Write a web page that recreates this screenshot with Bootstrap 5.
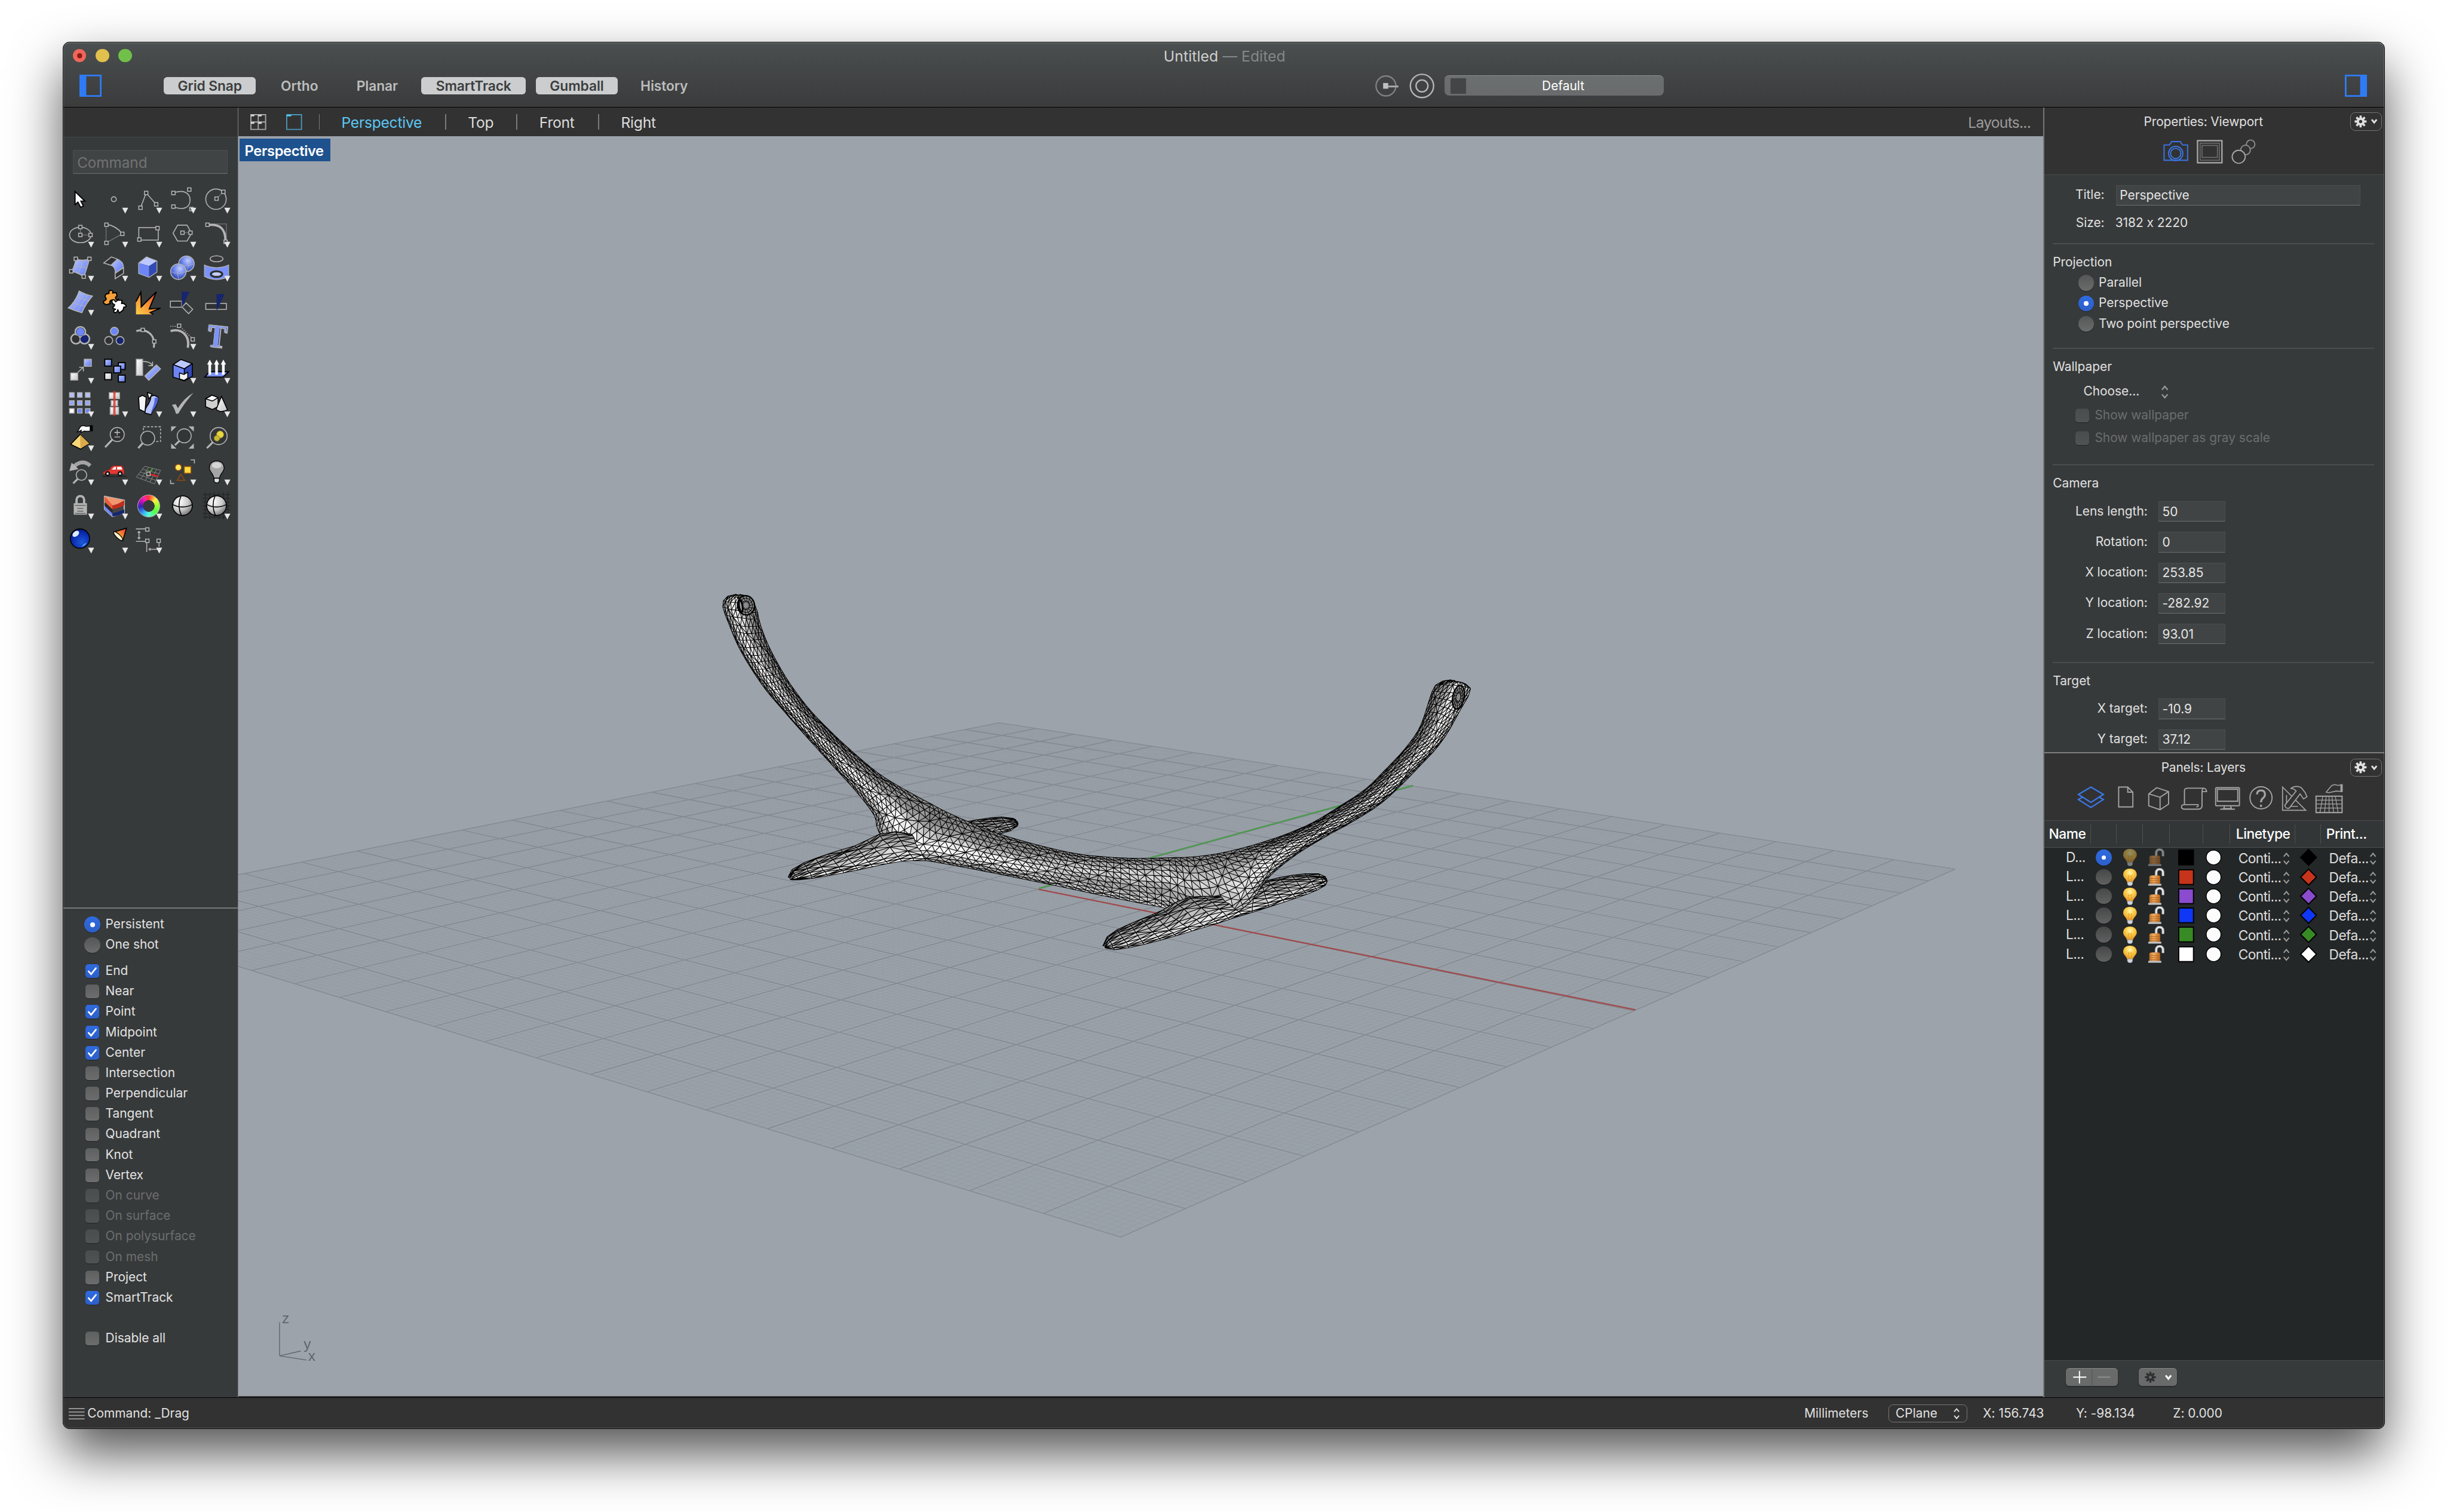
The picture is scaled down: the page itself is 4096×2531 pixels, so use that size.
<!DOCTYPE html>
<html lang="en" data-bs-theme="dark">
<head>
<meta charset="utf-8">
<title>Untitled — Edited</title>
<link href="https://cdn.jsdelivr.net/npm/bootstrap@5.3.0/dist/css/bootstrap.min.css" rel="stylesheet">
<style>
html,body{margin:0;background:#fff;overflow:hidden}
body{font-family:Inter,"Liberation Sans",sans-serif;font-size:22px;line-height:1;color:#e0e0e0;height:2531px;font-feature-settings:"calt" 0}
svg{display:block;overflow:visible;flex:none}
.desk{zoom:.94947;width:4314px;height:2666px;padding:75px 111px 0 112px;background:#fff}
.win{width:4091px;height:2443px;border-radius:11px;box-shadow:0 0 0 1px #000,0 44px 92px rgba(0,0,0,.68);background:#323232}
.clipper{border-radius:11px;height:100%;position:relative;overflow:hidden}
.clipper::after{content:"";position:absolute;inset:0;border:2px solid rgba(255,255,255,.2);border-radius:11px;pointer-events:none;border-top-color:rgba(255,255,255,.35)}
.titlebar{height:115px;background:linear-gradient(#4a4f4f,#3b3b3c);border-bottom:2px solid #000}
.lights{height:46px;padding-left:16px}
.light{width:24px;height:24px;border-radius:50%;margin-right:16.3px}
.wtitle{font-size:26px;color:#cfd0d0;letter-spacing:.1px;padding:2px 134px 0 0}
.toolrow{height:60px;padding:0 30px 0 28px;margin-top:0}
.snapbtn{height:31px;border-radius:6px;font-weight:600;font-size:24px;color:#bcbdbd;letter-spacing:-.1px;padding-top:2px}
.snapbtn.on{background:#cbcdce;color:#3c3e3f}
.disp{width:386px;height:36px;border-radius:8px;background:linear-gradient(#6c6f70,#696b6c);border-top:1px solid #8b8d8e;color:#fff;padding-left:10px}
.leftcol{width:308px;background:#373a3b;border-right:2px solid #7c7e7f}
.lefthead{height:52px;background:#323232;border-bottom:2px solid #454747}
.fld{background:#414445;border:1px solid #4b4e4f;border-bottom:2px solid #6d6f70;color:#e4e4e4}
.cmdfield{width:272px;height:42px;margin:22px 0 15px 17px;color:#717374;font-size:25.5px;padding:10px 0 0 6px}
.tools{display:grid;grid-template-columns:repeat(5,60px);grid-auto-rows:60px}
.tools svg{width:60px;height:60px}
.ln{fill:none;stroke:#b4b4b4;stroke-width:5}
.dim{fill:none;stroke:#777;stroke-width:4}
.osnap{height:863px;border-top:3px solid #757778;padding-top:10px}
.orow{height:36px;padding-left:28px;color:#e2e2e2}
.mk{width:46px;flex:none}
.rad{width:28px;height:28px;border-radius:50%;background:linear-gradient(#555656,#6b6c6c);box-shadow:0 1px 1px rgba(0,0,0,.4);flex:none}
.rad.on{background:linear-gradient(#2f6be1,#2c5fc8)}
.rad.on::after{content:"";width:8px;height:8px;border-radius:50%;background:#fff;margin:10px;display:block}
.chk{width:24px;height:24px;border-radius:5px;background:linear-gradient(#5e5f5f,#6c6d6d);box-shadow:0 1px 1px rgba(0,0,0,.4);flex:none}
.chk.on{background:linear-gradient(#2f6be1,#2c5fc8)}
.off{color:#6b6e6e!important}
.off .chk{background:linear-gradient(#4a4d4d,#505353)}
.tabs{height:50px;background:#323232;font-size:26px;color:#dcdcdc;letter-spacing:-.3px}
.tabs>div{padding-top:2px}
.tsep{width:2px;height:28px;background:#7a7a7a}
.view{width:3182px;height:2221px;background:#9ca3ab;position:relative}
.view canvas{width:3182px;height:2221px;display:block}
.vlabel{position:absolute;left:2px;top:4px;width:160px;height:40px;background:#1e528e;color:#fff;font-weight:600;font-size:25px;letter-spacing:-.4px;padding:4px 2px 0 0}
.rightcol{width:601px;border-left:3px solid #757778;background:#373a3b}
.phead{background:#323232;border-bottom:2px solid #4b4d4d}
.ptitle{padding:2px 0 0 22px;letter-spacing:-.15px}
.gearbtn{width:56px;height:32px;border:2px solid #767676;border-radius:9px;margin-right:4px;flex:none;gap:5px;--hole:#323232}
.pbody{height:1017px;overflow:hidden}
.prow{height:36px}
.psep{height:2px;background:#4b4e4f;margin-left:15px;width:566px;flex:none}
.pl1{width:106px}.pl2{width:182px}
.lhead{height:48px;background:#323637;border-bottom:2px solid #4d5050;font-weight:500;font-size:24px;color:#fff;letter-spacing:-.5px}
.lhead>div{height:34px;border-right:2px solid #4e5152}
.lhead>div:last-child{border:0}
.c1{width:82px}.c2{width:46px}.c3{width:46px}.c4{width:47px}.c5{width:59px}.c6{width:48px}.c7{width:114px}.c8{width:46px}.c9{width:108px}
.lrow{height:34px;font-size:24px;color:#dedede;letter-spacing:-.6px}
.lrow .rad:not(.on){background:linear-gradient(#464747,#606161)}
.lrow .c7,.lrow .c9{padding-top:3px}
.layers{background:#242728;flex:1;border-bottom:2px solid #4b4d4d}
.pfoot{height:64px;padding:0 0 6px 38px}
.fbtn{height:32px;border-radius:6px;background:#696b6b;border-top:1px solid #858787;box-shadow:0 1px 2px rgba(0,0,0,.5);--hole:#696b6b}
.status{height:55px;background:#323232;border-top:2px solid #000;font-size:22px;padding:2px 0 0 9px}
.cplane{width:139px;height:31px;border:2px solid #777;border-radius:8px;padding:0 11px 0 12px}
.wheel{width:40px;height:40px;border-radius:50%;border:2px solid #b4b4b4;margin:11px 0 0 10px;background:radial-gradient(circle,#373a3b 0 10px,transparent 10.5px),conic-gradient(#f33,#fe4 45deg,#af3 80deg,#5f4 130deg,#5fc 180deg,#37b4ff 215deg,#32b 265deg,#a1b 295deg,#f2a 330deg,#f33)}
.tw{position:relative;width:60px;height:60px}
.tw svg{position:absolute;inset:0}
</style>
</head>
<body>
<svg width="0" height="0" style="position:absolute">
<defs>
<linearGradient id="bl" x1="0" y1="0" x2="1" y2="1"><stop offset="0" stop-color="#bcc8ff"/><stop offset="1" stop-color="#5b76f2"/></linearGradient>
<linearGradient id="wh" x1="0" y1="0" x2="1" y2="1"><stop offset="0" stop-color="#fff"/><stop offset="1" stop-color="#c4c4c4"/></linearGradient>
<linearGradient id="fire" x1="0" y1="1" x2="1" y2="0"><stop offset="0" stop-color="#fdd04c"/><stop offset=".5" stop-color="#f58b34"/><stop offset="1" stop-color="#e8352b"/></linearGradient>
<radialGradient id="sph" cx=".6" cy=".3" r=".75"><stop offset="0" stop-color="#c4cfff"/><stop offset=".5" stop-color="#6c85ee"/><stop offset="1" stop-color="#223a9c"/></radialGradient>
<radialGradient id="gsp" cx=".35" cy=".3" r=".8"><stop offset="0" stop-color="#fff"/><stop offset=".55" stop-color="#c9c9c9"/><stop offset="1" stop-color="#666"/></radialGradient>
<radialGradient id="ball" cx=".6" cy=".7" r=".8"><stop offset="0" stop-color="#1d59d8"/><stop offset=".6" stop-color="#0a2bb0"/><stop offset="1" stop-color="#03106a"/></radialGradient>
<radialGradient id="bulbg" cx=".5" cy=".3" r=".6"><stop offset="0" stop-color="#fff6b0"/><stop offset=".5" stop-color="#fbcf4c"/><stop offset="1" stop-color="#eba02f"/></radialGradient>
<linearGradient id="lockg"><stop offset="0" stop-color="#c9792a"/><stop offset=".4" stop-color="#f0b066"/><stop offset="1" stop-color="#b8651c"/></linearGradient>
<symbol id="nd" overflow="visible"><rect x="-9" y="-9" width="18" height="18" fill="#2f3132" stroke="#b4b4b4" stroke-width="5"/></symbol>
<symbol id="tri" overflow="visible"><path d="M131 135H163L147 166Z" fill="#e6e6e6"/></symbol>
<symbol id="gear" viewBox="-12 -12 24 24"><g stroke="currentColor" stroke-width="3.800"><path d="M0-10.5V10.5M-10.5 0H10.5M-7.4-7.4L7.4 7.4M-7.4 7.4L7.4-7.4"/></g><circle r="7" fill="currentColor"/><circle r="2.800" style="fill:var(--hole)"/></symbol>
<symbol id="ud" viewBox="0 0 14 26"><path d="M2 9L7 3L12 9M2 17L7 23L12 17" fill="none" stroke="currentColor" stroke-width="2.4"/></symbol>
<symbol id="dn" viewBox="0 0 12 10"><path d="M2 2L6 7L10 2" fill="none" stroke="currentColor" stroke-width="2.8"/></symbol>
<symbol id="tick" viewBox="0 0 24 24"><path d="M5.5 12.5L10 17.5L18.5 7" fill="none" stroke="#fff" stroke-width="2.8" stroke-linecap="round"/></symbol>
<symbol id="bulb" viewBox="0 0 26 32"><path d="M13 1C5 1 1 6 1 11.500C1 16.500 6 19 8 25H18C20 19 25 16.500 25 11.500C25 6 21 1 13 1Z" fill="url(#bulbg)"/><path d="M11 24L10 13L13 15L16 13L15 24" fill="none" stroke="#e59b25"/><path d="M8.500 24.500H17.500V28.500L15.500 31H10.500L8.500 28.500Z" fill="#cfd5dc" stroke="#8d939a" stroke-width=".8"/></symbol>
<symbol id="ulock" viewBox="0 0 30 32"><path d="M15 14V8A6 6 0 0 1 27 8V14" fill="none" stroke="#8d8d8d" stroke-width="5"/><path d="M15 14V8A6 6 0 0 1 27 8V14" fill="none" stroke="#ececec" stroke-width="2.600"/><path d="M3 16Q3 13 8 13H18Q22 13 22 16V28H3Z" fill="url(#lockg)"/><path d="M3 18.500H22M3 22H22M3 25.500H22" stroke="#a85a18" stroke-width=".9"/><path d="M1 28H24V31H1Z" fill="#c9c9c9"/></symbol>
</defs>
</svg>
<div class="desk">
<div class="win"><div class="clipper d-flex flex-column">

<header class="titlebar">
  <div class="lights d-flex align-items-center">
    <div class="light" style="background:#ee665b"><svg width="24" height="24"><circle cx="12" cy="12" r="4.500" fill="#8c1a10"/></svg></div>
    <div class="light" style="background:#e1c14e"></div>
    <div class="light" style="background:#71c049"></div>
    <div class="wtitle flex-grow-1 text-center">Untitled <span style="color:#858888">— Edited</span></div>
  </div>
  <div class="toolrow d-flex align-items-center">
    <svg width="39" height="39"><path d="M1.500 1.500H37.500V37.500H1.500Z" fill="none" stroke="#2f7bf6" stroke-width="3"/><path d="M0 0H12V39H0Z" fill="#2f7bf6"/></svg>
    <div class="d-flex" style="gap:18px;margin-left:110px">
      <div class="snapbtn on d-flex align-items-center justify-content-center" style="width:162px">Grid Snap</div>
      <div class="snapbtn d-flex align-items-center justify-content-center" style="width:118px">Ortho</div>
      <div class="snapbtn d-flex align-items-center justify-content-center" style="width:120px">Planar</div>
      <div class="snapbtn on d-flex align-items-center justify-content-center" style="width:184px">SmartTrack</div>
      <div class="snapbtn on d-flex align-items-center justify-content-center" style="width:144px">Gumball</div>
      <div class="snapbtn d-flex align-items-center justify-content-center" style="width:128px">History</div>
    </div>
    <svg width="112" height="46" style="margin-left:1188px"><circle cx="21" cy="23" r="17.500" fill="none" stroke="#7e8181" stroke-width="2.500"/><path d="M16 18H25V28H16Z" fill="#bfc0c0"/><path d="M24 24H43" stroke="#a9abab" stroke-width="3"/><circle cx="84.500" cy="23" r="20.500" fill="none" stroke="#b5b7b7" stroke-width="2.500"/><circle cx="84.500" cy="23" r="10.500" fill="none" stroke="#b5b7b7" stroke-width="2.500"/></svg>
    <div class="disp d-flex align-items-center" style="margin-left:12px"><div style="width:28px;height:28px;background:#434546"></div><div class="flex-grow-1 text-center" style="padding:2px 6px 0 0">Default</div></div>
    <svg class="ms-auto" width="39" height="39"><path d="M1.500 1.500H37.500V37.500H1.500Z" fill="none" stroke="#2f7bf6" stroke-width="3"/><path d="M27 0H39V39H27Z" fill="#2f7bf6"/></svg>
  </div>
</header>

<main class="d-flex flex-grow-1" style="min-height:0">
<aside class="leftcol d-flex flex-column">
  <div class="lefthead"></div>
  <div class="fld cmdfield">Command</div>
  <div class="tools" id="tools">
<svg viewBox="0 0 180 180"><path d="M62 49V119L77 105L92 133L106 126L93 100H114Z" fill="#fff" stroke="#000" stroke-width="6"/></svg>
<svg viewBox="0 0 180 180"><circle cx="87" cy="90" r="13" class="ln"/><use href="#tri"/></svg>
<svg viewBox="0 0 180 180"><path class="ln" d="M48 135L78 57L131 117"/><use href="#nd" x="78" y="57"/><use href="#nd" x="48" y="135"/><use href="#nd" x="131" y="117"/><use href="#tri"/></svg>
<svg viewBox="0 0 180 180"><path class="ln" d="M50 54C100 38 130 60 130 95S100 150 50 133"/><use href="#nd" x="42" y="57"/><use href="#nd" x="126" y="39"/><use href="#nd" x="42" y="129"/><use href="#nd" x="137" y="142"/><use href="#tri"/></svg>
<svg viewBox="0 0 180 180"><circle cx="87" cy="90" r="54" class="ln"/><path class="dim" d="M90 87L126 51"/><use href="#nd" x="90" y="87"/><use href="#nd" x="126" y="51"/><use href="#tri"/></svg>

<svg viewBox="0 0 180 180"><ellipse cx="90" cy="99" rx="57" ry="41" class="ln"/><path class="dim" d="M90 57V99H144"/><use href="#nd" x="90" y="57"/><use href="#nd" x="90" y="99"/><use href="#nd" x="144" y="99"/><use href="#tri"/></svg>
<svg viewBox="0 0 180 180"><path class="dim" d="M46 45V141L132 93"/><path class="ln" d="M48 43Q100 50 132 93"/><use href="#nd" x="48" y="45"/><use href="#nd" x="132" y="93"/><use href="#nd" x="48" y="141"/><use href="#tri"/></svg>
<svg viewBox="0 0 180 180"><rect x="39" y="60" width="103" height="66" class="ln"/><use href="#nd" x="42" y="123"/><use href="#nd" x="138" y="63"/><use href="#tri"/></svg>
<svg viewBox="0 0 180 180"><path class="ln" d="M40 90L64 47H114L138 90L114 131H64Z"/><path class="dim" d="M90 87H132"/><use href="#nd" x="90" y="87"/><use href="#nd" x="132" y="87"/><use href="#tri"/></svg>
<svg viewBox="0 0 180 180"><path class="dim" d="M50 41H142V130"/><path d="M50 46C110 42 137 66 137 130" fill="none" stroke="#b4b4b4" stroke-width="12"/><use href="#nd" x="42" y="45"/><use href="#nd" x="138" y="135"/><use href="#tri"/></svg>

<svg viewBox="0 0 180 180"><path d="M66 45Q102 60 138 45Q124 100 108 139Q80 120 44 111Q62 80 66 45Z" fill="url(#bl)" stroke="#b4b4b4" stroke-width="5"/><path class="ln" style="stroke-width:3" d="M102 52Q94 90 78 124M56 80Q90 92 126 92"/><use href="#nd" x="66" y="45"/><use href="#nd" x="138" y="45"/><use href="#nd" x="108" y="139"/><use href="#nd" x="42" y="111"/><use href="#tri"/></svg>
<svg viewBox="0 0 180 180"><path d="M34 67L74 35L106 47L72 79Z" fill="#2f3132" stroke="#b4b4b4" stroke-width="5"/><path d="M72 79L106 47C134 56 138 78 138 92L94 122C96 100 90 86 72 79Z" fill="url(#bl)" stroke="#b4b4b4" stroke-width="4"/><path d="M94 122L138 92V122L94 150Z" fill="#2f3132" stroke="#b4b4b4" stroke-width="5"/><use href="#tri"/></svg>
<svg viewBox="0 0 180 180"><path d="M38 67L80 35L135 57L94 83Z" fill="#bcc8ff"/><path d="M38 67L94 83V143L38 123Z" fill="#6d85f5"/><path d="M94 83L135 57V115L94 143Z" fill="#3349b4"/><path class="ln" style="stroke-width:4" d="M38 67L80 35L135 57V115L94 143L38 123Z"/><use href="#tri"/></svg>
<svg viewBox="0 0 180 180"><g stroke="#b4b4b4" stroke-width="5"><circle cx="111" cy="71" r="41" fill="url(#sph)"/><circle cx="68" cy="113" r="41" fill="url(#sph)"/></g><path class="ln" style="stroke-width:2.500" d="M70 71Q111 92 152 71M118 30Q130 70 112 112M27 112Q68 132 109 112M74 72Q58 112 70 154"/><use href="#tri"/></svg>
<svg viewBox="0 0 180 180"><ellipse cx="90" cy="45" rx="34" ry="16" class="ln"/><path d="M26 78Q90 106 154 78V138Q90 172 26 138Z" fill="#7b92fa" stroke="#b4b4b4" stroke-width="4"/><ellipse cx="90" cy="126" rx="30" ry="15" fill="#c3ceff" stroke="#2e3031" stroke-width="11"/><use href="#tri"/></svg>

<svg viewBox="0 0 180 180"><path d="M84 35Q118 54 154 62Q120 100 98 150Q62 140 26 125Q66 90 84 35Z" fill="url(#bl)" stroke="#b4b4b4" stroke-width="5"/><path class="ln" style="stroke-width:3" d="M108 47Q80 100 50 134M130 56Q98 100 74 144M70 64Q104 82 138 86M48 96Q84 112 118 116"/><use href="#tri"/></svg>
<svg viewBox="0 0 180 180"><g stroke="#000" stroke-width="6" stroke-linejoin="round"><path d="M44 52L62 48Q58 30 74 32Q86 34 80 46L100 44L104 62Q92 66 98 78Q104 84 112 78L106 96L86 92Q84 80 72 84Q62 90 68 102L46 108L34 100Q28 90 42 84Q52 76 40 66Z" fill="#f5a03a"/><path d="M78 84Q90 76 96 92L108 84L130 84L128 102Q138 96 150 110Q156 122 140 120L136 136L116 152L108 134Q104 154 88 148Q84 136 96 132L84 128Q78 122 88 116Q96 106 84 104Q74 96 78 84Z" fill="#fff"/></g></svg>
<svg viewBox="0 0 180 180"><path d="M24 159V92L50 42L52 119L132 39L94 127H154L99 148L116 159Z" fill="url(#fire)"/><path d="M24 92L50 42L52 119L132 39L94 130L154 126L99 149L116 159" fill="none" stroke="#000" stroke-width="6"/></svg>
<svg viewBox="0 0 180 180"><rect x="26" y="89" width="60" height="32" fill="#2f3132" stroke="#b4b4b4" stroke-width="5"/><path class="ln" d="M109 98L144 132L122 155L88 120Z"/><path d="M85 39H127L87 123Z" fill="#16256e"/></svg>
<svg viewBox="0 0 180 180"><rect x="33" y="101" width="109" height="31" fill="#2f3132" stroke="#b4b4b4" stroke-width="5"/><path d="M90 51H132L94 134H90Z" fill="#16256e"/></svg>

<svg viewBox="0 0 180 180"><g stroke="#b4b4b4" stroke-width="8"><circle cx="67" cy="108" r="26" fill="#2f3132"/><circle cx="112" cy="108" r="26" fill="#16256e"/><circle cx="90" cy="71" r="27" fill="#2f3132"/></g><circle cx="67" cy="108" r="19" fill="#2f3132"/><circle cx="112" cy="108" r="19" fill="#16256e"/><circle cx="90" cy="71" r="21" fill="#6d85f5"/><use href="#tri"/></svg>
<svg viewBox="0 0 180 180"><g stroke="#b4b4b4" stroke-width="5"><circle cx="90" cy="68" r="21" fill="#6d85f5"/><circle cx="60" cy="117" r="21" fill="#2f3132"/><circle cx="120" cy="117" r="21" fill="#16256e"/></g></svg>
<svg viewBox="0 0 180 180"><path d="M26 67C80 52 130 85 118 155" fill="none" stroke="#b4b4b4" stroke-width="10"/><use href="#nd" x="60" y="61"/><use href="#nd" x="121" y="122"/></svg>
<svg viewBox="0 0 180 180"><path d="M27 67C85 50 130 90 118 155" fill="none" stroke="#b4b4b4" stroke-width="12"/><path d="M25 42H60M88 54L136 100" stroke="#b4b4b4" stroke-width="5" stroke-dasharray="5 7"/><use href="#nd" x="72" y="39"/><use href="#nd" x="144" y="111"/><use href="#tri"/></svg>
<svg viewBox="0 0 180 180"><g text-anchor="middle" font-family="Liberation Serif,serif" font-weight="700" font-size="172" transform="translate(83 151) rotate(6) scale(.84 1)"><text x="10" y="1" fill="#3349b4" stroke="#b4b4b4" stroke-width="7">T</text><text x="0" y="0" fill="#7c93fa" stroke="#b4b4b4" stroke-width="3">T</text></g></svg>

<svg viewBox="0 0 180 180"><g stroke="#b4b4b4" stroke-width="5"><rect x="39" y="109" width="37" height="37" fill="url(#wh)"/><rect x="111" y="36" width="37" height="37" fill="url(#bl)"/><path d="M76 106L106 78M84 78H106V100" fill="none"/></g><use href="#tri"/></svg>
<svg viewBox="0 0 180 180"><g stroke="#000" stroke-width="6"><rect x="39" y="36" width="36" height="36" fill="url(#bl)"/><rect x="111" y="54" width="36" height="36" fill="url(#bl)"/><rect x="87" y="72" width="36" height="36" fill="url(#bl)"/><rect x="39" y="108" width="36" height="36" fill="url(#wh)"/><rect x="111" y="120" width="36" height="36" fill="url(#bl)"/></g></svg>
<svg viewBox="0 0 180 180"><g stroke="#b4b4b4" stroke-width="5"><rect x="26" y="36" width="33" height="85" fill="url(#wh)"/><path d="M132 66L154 87L92 147L71 124Z" fill="url(#bl)"/><path d="M60 48Q96 46 112 68M112 48V70H90" fill="none"/></g></svg>
<svg viewBox="0 0 180 180"><g stroke="#000" stroke-width="5" stroke-linejoin="round"><path d="M40 64L82 37L142 59L100 87Z" fill="#bcc8ff"/><path d="M40 64L100 87V150L40 130Z" fill="#6d85f5"/><path d="M100 87L142 59V126L100 150Z" fill="#3349b4"/><path d="M74 108L98 116L118 104V136L98 148L74 140Z" fill="#f2f2f2"/></g><use href="#tri"/></svg>
<svg viewBox="0 0 180 180"><path d="M28 130L54 102H154L124 130Z" fill="#7b92fa" stroke="#000" stroke-width="6"/><path d="M54 118V60M90 118V60M126 118V60" stroke="#fff" stroke-width="14"/><path d="M54 38L68 64H40ZM90 38L104 64H76ZM126 38L140 64H112Z" fill="#fff"/><use href="#tri"/></svg>

<svg viewBox="0 0 180 180"><g stroke="#b4b4b4" stroke-width="5" fill="#b4c0fa"><path d="M33 36h24v24h-24zM75 36h24v24h-24zM117 36h24v24h-24z"/><path fill="#93a5f7" d="M33 78h24v24h-24zM75 78h24v24h-24zM117 78h24v24h-24z"/><path fill="#fff" d="M33 120h24v24h-24z"/><path fill="#6d85f5" d="M75 120h24v24h-24zM117 120h24v24h-24z"/></g><use href="#tri"/></svg>
<svg viewBox="0 0 180 180"><g stroke="#b4b4b4" stroke-width="5" fill="url(#wh)"><rect x="63" y="36" width="54" height="31"/><rect x="73" y="78" width="34" height="27"/><rect x="68" y="113" width="44" height="37"/></g><path d="M84 27H96V158H84Z" fill="#d8302b" opacity=".8"/><use href="#tri"/></svg>
<svg viewBox="0 0 180 180"><g stroke="#000" stroke-width="5" stroke-linejoin="round"><path d="M84 34L110 44L92 70Z" fill="#e8e8e8"/><path d="M38 60L58 50L78 60L72 138L42 124Z" fill="#f4f4f4"/><path d="M104 54L122 50L142 60Q142 80 128 110Q112 130 104 152L72 144Q70 120 90 96Q102 76 104 54Z" fill="#b6c3ff"/><path d="M122 64L142 60Q142 84 126 112Q112 130 104 152Q104 130 116 106Q124 84 122 64Z" fill="#5068d8" stroke="none"/></g><use href="#tri"/></svg>
<svg viewBox="0 0 180 180"><path d="M34 100L54 96L66 118Q96 66 148 36Q98 92 68 146L56 148Q48 118 34 100Z" fill="#b4b4b4"/><use href="#tri"/></svg>
<svg viewBox="0 0 180 180"><g stroke="#000" stroke-width="5" stroke-linejoin="round"><path d="M32 68L66 49L98 62L98 110L68 125L32 110Z" fill="#cfcfcf"/><path d="M32 68L66 49L98 62L68 80Z" fill="#fff"/><path d="M116 55L88 124Q114 146 148 126Z" fill="url(#wh)"/></g><use href="#tri"/></svg>

<svg viewBox="0 0 180 180"><path d="M74 64L92 34Q104 26 120 34L142 32V58Q124 62 112 58L92 66L96 54Z" fill="#fff" stroke="#000" stroke-width="4"/><path d="M142 28H156V60H142Z" fill="#000"/><path d="M88 77L39 129L91 154L137 124Z" fill="#f7d778" stroke="#000" stroke-width="5"/><path d="M88 77L91 152L137 124Z" fill="#d9a94a"/><use href="#tri"/></svg>
<svg viewBox="0 0 180 180"><circle cx="105" cy="77" r="37" class="ln" style="fill:#2f3132"/><path d="M41 144L79 104" stroke="#b4b4b4" stroke-width="10"/><path class="ln" d="M90 66H120M105 51V81M90 90H120"/></svg>
<svg viewBox="0 0 180 180"><rect x="63" y="36" width="91" height="78" class="ln" stroke-dasharray="12 8"/><circle cx="86" cy="96" r="37" class="ln" style="fill:#333637"/><path d="M36 149L60 122" stroke="#b4b4b4" stroke-width="10"/></svg>
<svg viewBox="0 0 180 180"><path d="M30 34H58L30 62ZM150 34V62L122 34ZM30 152V124L58 152ZM150 152H122L150 124Z" fill="#b4b4b4"/><circle cx="99" cy="84" r="37" class="ln" style="fill:#333637"/><path d="M50 133L74 110" stroke="#b4b4b4" stroke-width="10"/></svg>
<svg viewBox="0 0 180 180"><circle cx="101" cy="85" r="45" class="ln" style="fill:#333637"/><path d="M39 149L70 118" stroke="#b4b4b4" stroke-width="10"/><circle cx="109" cy="77" r="19" fill="#ead63e" stroke="#8c8130" stroke-width="3"/><circle cx="92" cy="97" r="15" fill="#c9b932" stroke="#8c8130" stroke-width="3"/></svg>

<svg viewBox="0 0 180 180"><path d="M142 62Q104 26 58 64" fill="none" stroke="#a4a4a4" stroke-width="20"/><path d="M32 90L44 46L80 80Z" fill="#b4b4b4"/><circle cx="96" cy="111" r="28" class="ln"/><path d="M52 155L76 132" stroke="#b4b4b4" stroke-width="10"/><use href="#tri"/></svg>
<svg viewBox="0 0 180 180"><path d="M26 119H156" stroke="#222" stroke-width="5"/><path d="M31 96Q50 84 66 84Q72 62 90 62H128Q138 70 142 92V106H36Q28 104 31 96Z" fill="#e03a34" stroke="#8d1410" stroke-width="2"/><path d="M76 82L90 68H98V82ZM104 68H126L132 82H104Z" fill="#fff"/><circle cx="54" cy="104" r="13" fill="#111"/><circle cx="120" cy="104" r="13" fill="#111"/><circle cx="54" cy="104" r="6" fill="#ddd"/><circle cx="120" cy="104" r="6" fill="#ddd"/><use href="#tri"/></svg>
<svg viewBox="0 0 180 180"><path class="ln" style="stroke-width:2.500;stroke:#999" d="M70 65L154 86L122 158L26 122ZM91 70L50 131M112 76L74 140M133 81L98 149M58 80L146 104M46 96L138 122M36 108L130 140"/><path d="M90 104L112 78" stroke="#3b9a2b" stroke-width="8"/><path d="M90 104L142 118" stroke="#d0211c" stroke-width="8"/><use href="#nd" x="90" y="105"/><use href="#tri"/></svg>
<svg viewBox="0 0 180 180"><g stroke="#8f4c12" stroke-width="5"><circle cx="68" cy="71" r="17" fill="#ffe95a"/><rect x="99" y="66" width="36" height="36" fill="#fbdc3e"/><path d="M82 107L102 139H62Z" fill="none"/></g><path class="ln" d="M133 31H153V50M27 137V156H46"/><use href="#tri"/></svg>
<svg viewBox="0 0 180 180"><path d="M91 37C62 37 52 56 52 74C52 94 74 104 76 128H106C108 104 130 94 130 74C130 56 120 37 91 37Z" fill="#a5a5a5" stroke="#000" stroke-width="4"/><ellipse cx="91" cy="60" rx="26" ry="16" fill="#d5d5d5"/><path d="M77 128H105V144L98 152H84L77 144Z" fill="#ddd" stroke="#000" stroke-width="4"/><use href="#tri"/></svg>

<svg viewBox="0 0 180 180"><path d="M70 82V62A20 20 0 0 1 110 62V82" fill="none" stroke="#b4b4b4" stroke-width="12"/><rect x="55" y="80" width="70" height="61" rx="3" fill="#b4b4b4"/><path d="M62 92H118M74 108H106M74 122H106M62 134H118" stroke="#555" stroke-width="4"/><use href="#tri"/></svg>
<svg viewBox="0 0 180 180"><path d="M38 44L142 64V132L80 150L38 112Z" fill="#444" stroke="#b4b4b4" stroke-width="7" stroke-linejoin="round"/><path d="M38 92L80 134V150L38 112Z" fill="#6d85f5"/><path d="M80 132Q112 128 142 112V132Q112 148 80 150Z" fill="#16256e"/><path d="M38 76L80 114V134L38 94Z" fill="#2b2b2b"/><path d="M38 44L80 92V112L38 72Z" fill="#ee5b35"/><path d="M80 92Q110 88 142 64V90Q112 108 80 112Z" fill="#c22c1c"/><path d="M38 44L142 64Q112 86 80 92Z" fill="#f1966f"/><use href="#tri"/></svg>
<div class="tw"><div style="position:absolute"><div class="wheel"></div></div><svg viewBox="0 0 180 180"><use href="#tri"/></svg></div>
<svg viewBox="0 0 180 180"><circle cx="90" cy="93" r="52" fill="url(#gsp)" stroke="#000" stroke-width="5"/><path d="M40 88Q88 112 140 88M82 42Q60 92 84 145" fill="none" stroke="#000" stroke-width="5"/></svg>
<svg viewBox="0 0 180 180"><path d="M18 34H162M18 54H162M18 74H162M18 94H162M18 114H162M18 134H162M18 154H162M30 22V164M54 22V164M78 22V164M102 22V164M126 22V164M150 22V164" stroke="#232526" stroke-width="4"/><circle cx="90" cy="93" r="52" fill="url(#gsp)" stroke="#000" stroke-width="5"/><path d="M40 88Q88 112 140 88M82 42Q60 92 84 145" fill="none" stroke="#000" stroke-width="5"/><use href="#tri"/></svg>

<svg viewBox="0 0 180 180"><circle cx="88" cy="87" r="51" fill="url(#ball)" stroke="#000" stroke-width="5"/><ellipse cx="66" cy="62" rx="20" ry="13" transform="rotate(-40 66 62)" fill="#dfeaff"/><path d="M124 108Q112 126 96 130Q114 112 124 108Z" fill="#6fc8ff"/><use href="#tri"/></svg>
<svg viewBox="0 0 180 180"><path d="M154 32L88 52Q86 74 134 98Z" fill="url(#fire)" stroke="#000" stroke-width="5"/><ellipse cx="110" cy="74" rx="32" ry="10" transform="rotate(44 110 74)" fill="#fff3cf" stroke="#000" stroke-width="4"/><use href="#tri"/></svg>
<svg viewBox="0 0 180 180"><path class="ln" d="M24 36H84M24 102H84M81 102V158M146 102V130M40 50V88M33 57L40 49L47 57M33 81L40 89L47 81M94 144H138M101 137L93 144L101 151"/><use href="#nd" x="84" y="39"/><use href="#nd" x="84" y="99"/><use href="#nd" x="144" y="99"/><use href="#tri"/></svg>
  </div>
  <div class="osnap mt-auto" id="osnap"></div>
</aside>

<section>
  <div class="tabs d-flex align-items-center">
    <svg width="28" height="28" style="margin-left:21px"><path d="M1 1H27V27H1ZM14 1V27M1 14H27" fill="none" stroke="#a8a8a8" stroke-width="2"/><path d="M1 1h6v3h-6zM14 1h6v3h-6zM1 14h6v3h-6zM14 14h6v3h-6z" fill="#d8d8d8"/></svg>
    <svg width="28" height="28" style="margin-left:36px"><path d="M1 1H27V27H1Z" fill="none" stroke="#4a95b8" stroke-width="2"/><path d="M1 1h8v3h-8z" fill="#5ac8f5"/></svg>
    <div class="tsep" style="margin-left:29px"></div>
    <div style="margin-left:38px;width:183px;color:#5cc6f2">Perspective</div>
    <div class="tsep"></div><div style="margin-left:38px;width:85px">Top</div>
    <div class="tsep"></div><div style="margin-left:39px;width:103px">Front</div>
    <div class="tsep"></div><div style="margin-left:39px">Right</div>
    <div class="ms-auto" style="color:#9b9b9b;margin-right:22px;letter-spacing:-.8px">Layouts...</div>
  </div>
  <div class="view"><canvas id="cv" width="3021" height="2109"></canvas>
    <div class="vlabel d-flex align-items-center justify-content-center">Perspective</div>
  </div>
</section>

<aside class="rightcol d-flex flex-column">
  <div class="phead" style="height:119px">
    <div class="d-flex align-items-center" style="height:49px"><div class="ptitle flex-grow-1 text-center">Properties: Viewport</div>
      <div class="gearbtn d-flex align-items-center justify-content-center"><svg width="24" height="24"><use href="#gear"/></svg><svg width="13" height="11"><use href="#dn"/></svg></div></div>
    <div class="d-flex align-items-center" style="padding-left:210px;gap:15px;margin-top:6px">
      <svg width="44" height="36" fill="none" stroke="#3a78e8" stroke-width="2"><path d="M1.500 7H11L15 1H30L34 7H43V34H1.500Z"/><circle cx="22" cy="22" r="12.500"/><circle cx="22" cy="22" r="9"/></svg>
      <svg width="46" height="42" fill="none" stroke="#a6a6a6"><rect x="1.500" y="1.500" width="43" height="39" stroke-width="2.500"/><g stroke="#747474" stroke-width="1.500"><rect x="6" y="6" width="34" height="30"/><rect x="9.500" y="10" width="27" height="21"/></g></svg>
      <svg width="44" height="44" fill="#323232" stroke="#8c8c8c" stroke-width="2"><circle cx="34" cy="9" r="7.500"/><circle cx="25" cy="19" r="8.500"/><circle cx="13" cy="31" r="11.500" stroke="#a6a6a6"/></svg>
    </div>
  </div>
  <div class="pbody">
    <div class="prow d-flex align-items-center" style="margin-top:17px"><div class="pl1 text-end">Title:</div><div class="fld d-flex align-items-center" style="margin-left:20px;width:431px;height:36px;padding:2px 0 0 6px">Perspective</div></div>
    <div class="prow d-flex align-items-center" style="margin-top:13px"><div class="pl1 text-end">Size:</div><div style="margin-left:19px">3182 x 2220</div></div>
    <div class="psep" style="margin-top:18px"></div>
    <div class="prow d-flex align-items-center" style="margin:14px 0 0 15px">Projection</div>
    <div class="prow d-flex align-items-center" style="padding-left:60px;gap:8px"><div class="rad"></div>Parallel</div>
    <div class="prow d-flex align-items-center" style="padding-left:60px;gap:8px"><div class="rad on"></div>Perspective</div>
    <div class="prow d-flex align-items-center" style="padding-left:60px;gap:8px"><div class="rad"></div>Two point perspective</div>
    <div class="psep" style="margin-top:24px"></div>
    <div class="prow d-flex align-items-center" style="margin:14px 0 8px 15px">Wallpaper</div>
    <div class="prow d-flex align-items-center" style="padding-left:69px"><div style="width:136px">Choose...</div><svg width="14" height="26" style="color:#9a9a9a"><use href="#ud"/></svg></div>
    <div class="off d-flex align-items-center" style="height:40px;margin-top:4px;padding-left:55px;gap:10px"><div class="chk"></div>Show wallpaper</div>
    <div class="off d-flex align-items-center" style="height:40px;padding-left:55px;gap:10px"><div class="chk"></div>Show wallpaper as gray scale</div>
    <div class="psep" style="margin-top:26px"></div>
    <div class="prow d-flex align-items-center" style="margin:14px 0 13px 15px">Camera</div>
    <div id="camf" class="d-flex flex-column" style="gap:18px"></div>
    <div class="psep" style="margin-top:31px"></div>
    <div class="prow d-flex align-items-center" style="margin:14px 0 13px 15px">Target</div>
    <div id="tarf" class="d-flex flex-column" style="gap:18px"></div>
  </div>
  <div class="phead" style="height:121px;border-top:3px solid #7c7e7f">
    <div class="d-flex align-items-center" style="height:50px"><div class="ptitle flex-grow-1 text-center">Panels: Layers</div>
      <div class="gearbtn d-flex align-items-center justify-content-center"><svg width="24" height="24"><use href="#gear"/></svg><svg width="13" height="11"><use href="#dn"/></svg></div></div>
    <svg width="596" height="56" viewBox="-1 -2 596 56" fill="none" stroke="#a4a4a4" stroke-width="2">
      <path d="M81 8L103 21L81 35L59 21ZM66 26L59 30L81 44L103 30L96 26" stroke="#3a78e8" stroke-width="2.400"/>
      <path d="M130 8H146L155 17V43H130ZM146 8V17H155"/>
      <path d="M183 20L197 9L218 16V38L203 48L183 41ZM183 20L203 26L218 16M203 26V48"/>
      <path d="M246 39V14Q246 10 252 10H280Q285 11 285 16H277V42Q276 47 270 47H245Q240 46 241 42Q241 39 246 39H270Q271 43 267 43M277 16Q277 11 280 10"/>
      <path d="M303 9H341Q343 9 343 11V39Q343 41 341 41H303Q301 41 301 39V11Q301 9 303 9ZM304 12H340V33H304ZM317 41L315 46H329L327 41M309 47H335"/>
      <circle cx="381" cy="27" r="19.500"/><path d="M374 21Q374 14 381 14Q388 14 388 21Q388 25 384 28Q381 31 381 35M381 39V43" stroke-width="3.400"/>
      <path d="M419 8V49H460ZM426 22V42H446" stroke-width="1.800"/>
      <path d="M423 40L443 15Q437 9 433 11Q442 4 452 9L459 18L462 25L456 29L450 20L431 45Q424 47 423 40Z" stroke-width="1.800" fill="#323232"/>
      <path d="M478 24H524V53H478ZM478 31H524M478 38H524M478 45H524M485 53L490 24M493 53L496 24M501 53V24M509 53L506 24M517 53L512 24" stroke-width="1.300"/><path d="M478 24H524V53H478Z"/><path d="M496 17L505 6Q510 2 516 5L524 4V16L514 15L500 18Z" stroke-width="1.600"/><path d="M521 3H525V16H521Z" fill="#a4a4a4" stroke="none"/>
    </svg>
  </div>
  <div class="lhead d-flex align-items-center"><div class="c1 d-flex align-items-center" style="padding-left:8px">Name</div><div class="c2"></div><div class="c3"></div><div class="c4"></div><div class="c5"></div><div class="c6"></div><div class="c7 d-flex align-items-center" style="padding-left:10px">Linetype</div><div class="c8"></div><div class="c9 d-flex align-items-center" style="padding-left:9px">Print...</div></div>
  <div class="layers" id="layers"></div>
  <div class="pfoot d-flex align-items-center">
    <div class="fbtn d-flex"><svg width="92" height="31" fill="none"><path d="M24 4V26M13 15H36" stroke="#fff" stroke-width="2"/><path d="M46 1V31" stroke="#5b5d5d" stroke-width="2"/><path d="M56 15H78" stroke="#8f9191" stroke-width="2"/></svg></div>
    <div class="fbtn d-flex align-items-center" style="width:68px;margin-left:36px;padding-left:10px;gap:14px"><svg width="22" height="22" style="color:#2e3031"><use href="#gear"/></svg><svg width="14" height="12" style="color:#fff"><use href="#dn"/></svg></div>
  </div>
</aside>
</main>

<footer class="status d-flex align-items-center">
  <svg width="28" height="20"><path d="M0 1H28M0 7H28M0 13H28M0 19H28" stroke="#a0a0a0" stroke-width="1.800"/></svg>
  <div style="margin-left:5px;width:3027px;font-size:22px">Command: _Drag</div>
  <div style="width:148px">Millimeters</div>
  <div class="cplane d-flex align-items-center justify-content-between"><span>CPlane</span><svg width="13" height="22"><use href="#ud"/></svg></div>
  <div style="margin-left:28px;width:164px">X: 156.743</div>
  <div style="width:171px">Y: -98.134</div>
  <div>Z: 0.000</div>
</footer>
</div></div>
</div>
<script src="https://cdn.jsdelivr.net/npm/bootstrap@5.3.0/dist/js/bootstrap.bundle.min.js"></script>
<script>
// Object snap list: [label, state] with 1 = checked, 0 = unchecked, -1 = disabled
const snaps=[['End',1],['Near',0],['Point',1],['Midpoint',1],['Center',1],['Intersection',0],['Perpendicular',0],['Tangent',0],['Quadrant',0],['Knot',0],['Vertex',0],['On curve',-1],['On surface',-1],['On polysurface',-1],['On mesh',-1],['Project',0],['SmartTrack',1]];
const mark=(cls,inner='')=>`<div class="mk d-flex justify-content-center"><div class="${cls}">${inner}</div></div>`;
const tick='<svg width="24" height="24"><use href="#tick"/></svg>';
document.getElementById('osnap').innerHTML=
 `<div class="orow d-flex align-items-center">${mark('rad on')}Persistent</div><div class="orow d-flex align-items-center" style="margin-bottom:10px">${mark('rad')}One shot</div>`+
 snaps.map(([t,s])=>`<div class="orow d-flex align-items-center ${s<0?'off':''}">${mark('chk'+(s>0?' on':''),s>0?tick:'')}${t}</div>`).join('')+
 `<div class="orow d-flex align-items-center" style="margin-top:36px">${mark('chk')}Disable all</div>`;

const field=([l,v])=>`<div class="prow d-flex align-items-center"><div class="pl2 text-end">${l}:</div><div class="fld d-flex align-items-center" style="margin-left:19px;width:118px;height:36px;padding:2px 0 0 6px">${v}</div></div>`;
document.getElementById('camf').innerHTML=[['Lens length','50'],['Rotation','0'],['X location','253.85'],['Y location','-282.92'],['Z location','93.01']].map(field).join('');
document.getElementById('tarf').innerHTML=[['X target','-10.9'],['Y target','37.12']].map(field).join('');

const ud='<svg width="13" height="24" style="color:#999"><use href="#ud"/></svg>';
document.getElementById('layers').innerHTML=['#000','#c5341b','#8a4bcf','#0f37f5','#388a24','#fff'].map((c,i)=>
`<div class="lrow d-flex align-items-center"><div class="c1" style="padding-left:38px">${i?'L...':'D...'}</div>
<div class="c2 d-flex justify-content-center"><div class="rad ${i?'':'on'}"></div></div>
<div class="c3 d-flex justify-content-center"><svg width="26" height="32" opacity="${i?1:.5}"><use href="#bulb"/></svg></div>
<div class="c4 d-flex justify-content-center"><svg width="30" height="32" opacity="${i?1:.5}"><use href="#ulock"/></svg></div>
<div class="c5 d-flex justify-content-center"><svg width="28" height="28"><rect x="1" y="1" width="26" height="26" fill="${c}" stroke="#000" stroke-width="2"/></svg></div>
<div class="c6 d-flex justify-content-center" style="padding-right:11px"><svg width="28" height="28"><circle cx="14" cy="14" r="13" fill="#fcfcfc" stroke="#000" stroke-width="1.500"/></svg></div>
<div class="c7 d-flex align-items-center" style="padding-left:14px"><span style="width:78px">Conti...</span>${ud}</div>
<div class="c8 d-flex justify-content-center" style="padding-left:1px"><svg width="30" height="30"><path d="M15 1L29 15L15 29L1 15Z" fill="${c}" stroke="#000" stroke-width="2"/></svg></div>
<div class="c9 d-flex align-items-center" style="padding-left:14px"><span style="width:71px">Defa...</span>${ud}</div></div>`).join('');

// Viewport drawing
const cv=document.getElementById('cv'),g=cv.getContext('2d');
g.scale(3021/3182,2109/2221);g.translate(-420,-240);
// ground plane corners with homogeneous weights
const C={T:[1761,1274,1],B:[1975.8,2180.7,.4787],L:[100.5,1605.6,.7141],R:[3447,1532,.7646]};
function gp(u,v){ // u: T->R, v: T->L
  const ws=[[C.T,(1-u)*(1-v)],[C.R,u*(1-v)],[C.L,(1-u)*v],[C.B,u*v]];
  let x=0,y=0,w=0;for(const[c,k]of ws){const q=c[2]*k;x+=c[0]*q;y+=c[1]*q;w+=q}
  return[x/w,y/w];
}
function seg(a,b){g.moveTo(a[0],a[1]);g.lineTo(b[0],b[1])}
g.fillStyle='rgba(140,150,158,.08)';g.beginPath();[gp(0,0),gp(1,0),gp(1,1),gp(0,1)].forEach((p,i)=>i?g.lineTo(...p):g.moveTo(...p));g.fill();
function grid(n,skip,col,w){g.strokeStyle=col;g.lineWidth=w;g.beginPath();for(let i=0;i<=n;i++){if(skip&&i%skip==0)continue;seg(gp(i/n,0),gp(i/n,1));seg(gp(0,i/n),gp(1,i/n))}g.stroke()}
grid(200,10,'rgba(124,128,138,.18)',1.1);
grid(20,0,'rgba(114,116,126,.56)',1.5);
g.lineWidth=2.6;
g.strokeStyle='#a04a4c';g.beginPath();seg(gp(.5,.5),[2883,1780]);g.stroke();
g.strokeStyle='#4a9a4c';g.beginPath();seg([1831.4,1566],[2491,1384.6]);g.stroke();

// Surface patches: each station is [ax,ay,bx,by], the two silhouette points of one cross-section
function cr(a,b,c,d,t){return .5*((2*b)+(c-a)*t+(2*a-5*b+4*c-d)*t*t+(3*b-a-3*c+d)*t*t*t)}
function resample(st,step){
  const out=[];const at=k=>st[Math.max(0,Math.min(st.length-1,k))];const fine=[];
  for(let i=0;i<st.length-1;i++)for(let j=0;j<20;j++)fine.push(at(i).map((_,k)=>cr(at(i-1)[k],at(i)[k],at(i+1)[k],at(i+2)[k],j/20)));
  fine.push(st[st.length-1].slice());
  out.push(fine[0]);let acc=0;
  for(let i=1;i<fine.length;i++){const p=fine[i],q=fine[i-1];acc+=.5*(Math.hypot(p[0]-q[0],p[1]-q[1])+Math.hypot(p[2]-q[2],p[3]-q[3]));if(acc>=step){out.push(p);acc=0}}
  out.push(fine[fine.length-1]);return out;
}
let seed=7;const rnd=()=>(seed=(seed*16807)%2147483647)/2147483647;
function patch(st,step,m,bulge,shade,lw,jit){
  const S=resample(st,step),n=S.length,P=[];
  for(let i=0;i<n;i++){
    const[a,b,c,d]=S[i],nx=-(d-b),ny=c-a,row=[];
    for(let j=0;j<=m;j++){const s=j/m,v=.45*s+.55*(1-Math.cos(Math.PI*s))/2,k=bulge*4*v*(1-v);
      const jj=(j&&j<m)?jit:0;
      row.push([a+(c-a)*v+nx*k+(rnd()-.5)*jj,b+(d-b)*v+ny*k+(rnd()-.5)*jj,v])}
    P.push(row);
  }
  const edges=new Path2D(),edge=(a,b)=>{edges.moveTo(a[0],a[1]);edges.lineTo(b[0],b[1])};
  for(let i=0;i<n-1;i++)for(let j=0;j<m;j++){
    const q=[P[i][j],P[i+1][j],P[i+1][j+1],P[i][j+1]],alt=(i+j)%5==0;
    const T=alt?[[q[0],q[1],q[3]],[q[1],q[2],q[3]]]:[[q[0],q[1],q[2]],[q[0],q[2],q[3]]];
    for(const t of T){
      const v=(t[0][2]+t[1][2]+t[2][2])/3;
      const s=Math.max(90,Math.min(250,shade(v,i/n)+(rnd()-.5)*26))|0;
      g.fillStyle=g.strokeStyle=`rgb(${s},${s},${s})`;g.lineWidth=.6;g.beginPath();g.moveTo(t[0][0],t[0][1]);g.lineTo(t[1][0],t[1][1]);g.lineTo(t[2][0],t[2][1]);g.closePath();g.fill();g.stroke();
    }
    edge(q[0],q[1]);edge(q[0],q[3]);alt?edge(q[1],q[3]):edge(q[0],q[2]);
    if(j==m-1)edge(q[3],q[2]);if(i==n-2)edge(q[1],q[2]);
  }
  g.lineJoin='round';g.lineWidth=lw;g.strokeStyle='#000';g.stroke(edges);
}
const bump=(v,c,w)=>{const d=(v-c)/w;return Math.exp(-d*d)};
// rear feet
patch([[1700,1449,1745,1478],[1740,1442.5,1766,1469],[1776,1440,1789,1461],[1791,1445,1795,1452]],17,7,0,(v)=>135+50*v,1.2,1.5);
patch([[2180,1575,2160,1622],[2212,1563,2202,1610],[2229,1554,2255,1593],[2255,1547,2285,1583],[2292,1541,2315,1572],[2323,1540,2336,1561],[2336,1545,2340,1553]],20,8,0,(v)=>130+110*v,1.2,2);
// main body, left tip to right tip
patch([[1306,1048,1296,1048],[1324,1054,1279,1053],[1335,1078,1274,1069],[1340,1100,1283,1095],[1357,1143,1305,1146],[1388,1198,1344,1208],[1424,1247,1384,1256],[1464,1289,1430,1308],[1505,1327,1470,1352],[1551,1365,1509,1395],[1597,1393,1541,1437],[1643,1418,1549,1466],[1670,1432,1585,1512],[1699,1445,1632,1517],[1750,1466,1695,1528],[1816,1486,1772,1543],[1893,1504,1870,1563],[1957,1511,1950,1580],[2010,1513,2020,1594],[2060,1512,2060,1603],[2093,1511,2108,1625],[2125,1508,2160,1620],[2156,1503,2204,1590],[2208,1490,2238,1545],[2260,1473,2286,1506],[2312,1451,2333,1477],[2362,1421,2385,1448],[2407,1391,2432,1418],[2443,1356,2472,1382],[2475,1322,2506,1347],[2498,1291,2534,1317],[2509,1267,2556,1285],[2519,1236,2574,1252],[2526,1216,2591,1222],[2536,1203,2590,1209],[2556,1199,2572,1202]],13,10,-.04,
 (v,u)=>{const left=u<.42?1:Math.max(0,1-(u-.42)/.08),right=u>.68?1:Math.max(0,1-(.68-u)/.08);
  const mid=1-Math.max(left,right);
  return left*(135+115*bump(v,.64,.27))+right*(135+110*bump(v,.68,.3))+mid*(130+85*bump(v,.38,.25)+75*bump(v,.98,.25))},1.15,1.8);
// front feet
patch([[1606,1470,1632,1517],[1575,1466,1608,1517],[1543,1473,1584,1519],[1515,1488,1546,1526],[1470,1502,1500,1536],[1419,1520,1434,1548],[1396,1533,1408,1551],[1390,1545,1396,1551]],24,8,0,(v)=>140+110*v,1.2,3);
patch([[2150,1580,2190,1613],[2092,1582,2142,1629],[2056,1601,2108,1639],[2030,1613,2072,1650],[1993,1628,2020,1664],[1960,1644,1978,1673],[1947,1658,1956,1674],[1945,1667,1950,1672]],24,9,0,(v)=>130+120*v,1.2,3);
// eyelets at the arm tips
function eye(x,y,rx,ry,rot,open){g.save();g.translate(x,y);g.rotate(rot);
  g.fillStyle='#8a8a8a';g.strokeStyle='#000';g.lineWidth=2.4;g.beginPath();g.ellipse(0,0,rx,ry,0,0,7);g.fill();g.stroke();g.lineWidth=1;
  for(const k of[.75,.45]){g.beginPath();g.ellipse(0,0,rx*k,ry*k,0,0,7);g.stroke()}
  for(let i=0;i<14;i++){const a=i*Math.PI/7;g.beginPath();g.moveTo(rx*Math.cos(a),ry*Math.sin(a));g.lineTo(.3*rx*Math.cos(a+.4),.3*ry*Math.sin(a+.4));g.stroke()}
  if(open){g.fillStyle='#9ca3ab';g.lineWidth=3;g.beginPath();g.ellipse(-rx*.62,0,3,ry*.6,0,0,7);g.fill();g.stroke()}
  g.restore()}
eye(1315,1067,15,17,-.15,true);eye(2571,1229,10,21,.2,false);
// world axis marker
g.strokeStyle='#5f656a';g.lineWidth=1.4;g.beginPath();seg([492.6,2331],[492.6,2390]);seg([492.6,2390],[530,2381.500]);seg([492.6,2390],[540,2397.500]);g.stroke();
g.fillStyle='#5f656a';g.font='26px "Liberation Sans",sans-serif';g.fillText('z',497,2332);g.fillText('y',535,2378);g.fillText('x',543,2399);
</script>
</body>
</html>
